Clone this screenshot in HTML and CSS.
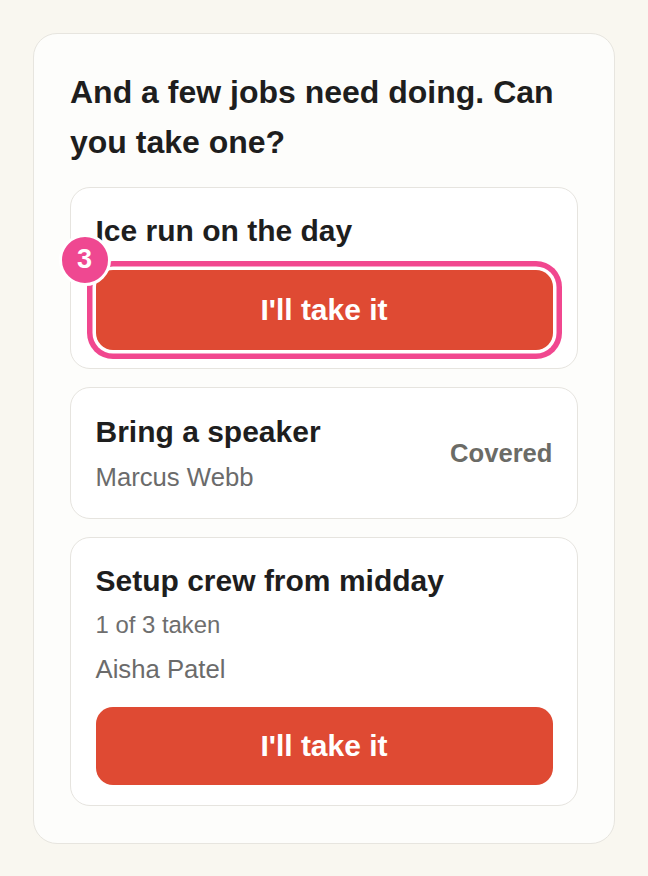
FILE: index.html
```html
<!DOCTYPE html>
<html lang="en">
<head>
<meta charset="utf-8">
<title>Jobs</title>
<link rel="stylesheet" href="styles.css">
</head>
<body>
  <section class="panel">
    <h1 class="panel-title">And a few jobs need doing. Can you take one?</h1>
    <div class="jobs">
      <article class="job job--action job--focused">
        <h2 class="job-title">Ice run on the day</h2>
        <div class="btn-wrap">
          <span class="badge">3</span>
          <button class="btn btn--focus">I'll take it</button>
        </div>
      </article>
      <article class="job job--row">
        <div class="job-info">
          <h2 class="job-title">Bring a speaker</h2>
          <p class="job-person">Marcus Webb</p>
        </div>
        <span class="job-status">Covered</span>
      </article>
      <article class="job job--action">
        <h2 class="job-title">Setup crew from midday</h2>
        <p class="job-count">1 of 3 taken</p>
        <p class="job-person job-person--spaced">Aisha Patel</p>
        <button class="btn">I'll take it</button>
      </article>
    </div>
  </section>
</body>
</html>
```
FILE: styles.css
```css
* { box-sizing: border-box; }
html, body { margin: 0; }
body {
  background: #f9f7f0;
  padding: 33px;
  font-family: "Liberation Sans", Arial, Helvetica, sans-serif;
  color: #1e1e1e;
}
.panel {
  background: #fdfdfb;
  border: 1.5px solid #e7e5df;
  border-radius: 24px;
  padding: 34px 36px 37px;
}
.panel-title {
  margin: 0 0 20px;
  font-size: 32px;
  line-height: 49.5px;
  font-weight: 700;
  color: #1e1e1e;
}
.jobs {
  display: flex;
  flex-direction: column;
  gap: 18px;
}
.job {
  background: #fff;
  border: 1.5px solid #e6e4df;
  border-radius: 20px;
  padding: 24px 24.5px 24px;
  display: flex;
  flex-direction: column;
}
.job--action { padding-bottom: 20px; }
.job--focused { padding-bottom: 18px; }
.job--row {
  flex-direction: row;
  align-items: center;
  justify-content: space-between;
  padding-top: 25px;
  padding-bottom: 23px;
}
.job-info { display: flex; flex-direction: column; }
.job-title {
  margin: 0;
  font-size: 30px;
  line-height: 38px;
  font-weight: 700;
  color: #1e1e1e;
}
.job-person {
  margin: 8px 0 0;
  font-size: 25.7px;
  line-height: 36px;
  color: #6b6b6b;
}
.job-person--spaced { margin-top: 8px; }
.job-count {
  margin: 7px 0 0;
  font-size: 23.9px;
  line-height: 36px;
  color: #6e6e6e;
}
.job-status {
  font-size: 25.6px;
  font-weight: 700;
  color: #6b6b66;
}
.btn-wrap {
  position: relative;
  margin-top: 19.5px;
  display: flex;
  flex-direction: column;
}
.btn {
  margin-top: 20px;
  height: 78px;
  border: none;
  border-radius: 17px;
  background: #df4a33;
  color: #fff;
  font-family: inherit;
  font-size: 30px;
  font-weight: 700;
  width: 100%;
}
.btn-wrap .btn { margin-top: 0; height: 80px; }
.btn--focus {
  box-shadow: 0 0 0 3.5px #fff, 0 0 0 9px #f1478f;
}
.badge {
  position: absolute;
  left: -37px;
  top: -36px;
  width: 52px;
  height: 52px;
  border-radius: 50%;
  background: #ef4891;
  border: 3px solid #fff;
  color: #fff;
  font-size: 27px;
  font-weight: 700;
  display: flex;
  align-items: center;
  justify-content: center;
  z-index: 1;
}
```
